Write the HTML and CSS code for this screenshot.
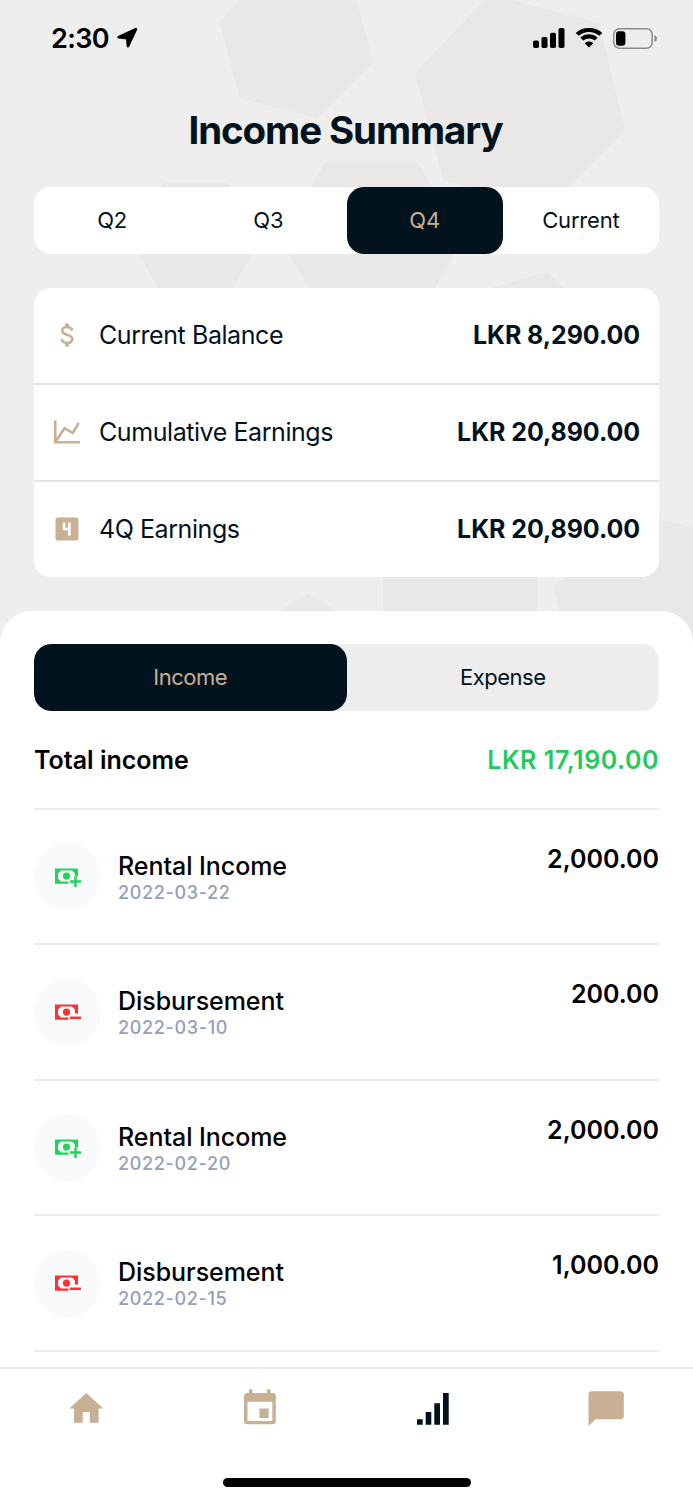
FILE: index.html
```html
<!DOCTYPE html>
<html lang="en">
<head>
<meta charset="utf-8">
<title>Income Summary</title>
<link rel="stylesheet" href="styles.css">
</head>
<body>
<svg width="0" height="0" class="defs">
  <symbol id="cash" viewBox="0 0 26 19">
    <path d="M0 0.500H23V9.500H20V15.700H0Z"/>
    <path fill="#f8fafc" d="M6 2.600L3 5.600V10.600L6 13.600H20V5.600L17 2.600Z"/>
    <path d="M11.500 4.500a3.600 3.600 0 1 1 0 7.200a3.600 3.600 0 1 1 0-7.200Z"/>
  </symbol>
</svg>
<div class="screen">
  <svg class="backdrop" width="693" height="650" viewBox="0 0 693 650">
    <path d="M242 -2L219 21L240 98L317 118L373 62L356 -2ZM490 -6L599 23L625 130L547 208L443 180L415 73ZM326 161H417L463 240L417 318H326L281 240ZM163 183H228L261 239L228 296H163L130 239ZM547 272L484 290L500 350H600L566 290ZM383 560H538V620H383ZM308 594L275 613H341ZM640 514L693 528V650H569L553 587Z"/>
  </svg>
  <header class="status">
    <div class="clock"><span>2:30</span>
      <svg width="21" height="22" viewBox="0 0 21 22"><path stroke="#000" stroke-width="2.600" stroke-linejoin="round" d="M18.900 2.200L11 19.200L10.200 11.300L1.600 10.300Z"/></svg>
    </div>
    <div class="signals">
      <svg width="32" height="20" viewBox="0 0 32 20"><rect y="12.500" width="6" height="7.500" rx="1.800"/><rect x="8.500" y="9" width="6" height="11" rx="1.800"/><rect x="17" y="4.800" width="6" height="15.200" rx="1.800"/><rect x="25.500" y="0" width="6" height="20" rx="1.800"/></svg>
      <svg width="28" height="20" viewBox="0 0 28 20"><path d="M3.800 7.800L.7 5.100C7.500-1.800 20.500-1.800 27.300 5.100L24.200 7.800C18.800 2.700 9.200 2.700 3.800 7.800ZM8.300 12.600L5.300 9.700C10 5.200 18 5.200 22.700 9.700L19.700 12.600C16.300 9.700 11.700 9.700 8.300 12.600ZM14 19.600L9.800 15.200C12 12.900 16 12.900 18.200 15.200Z"/></svg>
      <svg width="44" height="21" viewBox="0 0 44 21"><rect x=".8" y=".8" width="38.400" height="19.400" rx="5.500" fill="none" stroke="#8c8c8c" stroke-width="1.500"/><rect x="3" y="3.200" width="9.400" height="14.600" rx="3"/><path fill="#8c8c8c" d="M41.500 7Q44 8 44 10.500T41.500 14Z"/></svg>
    </div>
  </header>
  <h1 class="title"><span>Income Summary</span></h1>
  <nav class="tabs quarters"><span class="tab">Q2</span><span class="tab">Q3</span><span class="tab active">Q4</span><span class="tab">Current</span></nav>
  <section class="card">
    <div class="stat">
      <svg width="26" height="26" viewBox="0 0 26 26"><path fill="none" stroke="#c8b095" stroke-width="2.600" d="M18.200 8.600C17.600 5.900 15.600 5 13 5C10.200 5 8.200 6.300 8.200 8.600C8.200 11 10 12 13 12.800C16.500 13.600 18.200 14.800 18.200 17.200C18.200 19.700 16 20.900 13 20.900C9.900 20.900 8 19.700 7.700 17.200"/><path d="M11.100 1.500h3.800v3.500h-3.800zM11.100 21h3.800v3.500h-3.800z"/></svg>
      <span class="label">Current Balance</span><b class="amount">LKR 8,290.00</b>
    </div>
    <div class="stat">
      <svg width="26" height="26" viewBox="0 0 26 26"><path fill="none" stroke="#c8b095" stroke-width="2.500" d="M1.300 1.500V23.300H26M2 22L10.500 9.200L18.800 14L24.800 3.800"/></svg>
      <span class="label">Cumulative Earnings</span><b class="amount">LKR 20,890.00</b>
    </div>
    <div class="stat">
      <svg width="26" height="26" viewBox="0 0 26 26"><path fill-rule="evenodd" d="M4 1.500H22A2.500 2.500 0 0 1 24.500 4V22A2.500 2.500 0 0 1 22 24.500H4A2.500 2.500 0 0 1 1.500 22V4A2.500 2.500 0 0 1 4 1.500ZM8.800 6.500V14.300H14V19.500H16.700V6.500H14V11.700H11.400V6.500Z"/></svg>
      <span class="label">4Q Earnings</span><b class="amount">LKR 20,890.00</b>
    </div>
  </section>
  <main class="sheet">
    <nav class="tabs kinds"><span class="tab active">Income</span><span class="tab">Expense</span></nav>
    <div class="total"><span class="total-label">Total income</span><span class="total-value">LKR 17,190.00</span></div>
    <div class="entry"><div class="badge plus"><svg width="26" height="19"><use href="#cash"/><path class="halo" d="M20.500 8.500V19M13.500 13.500H26"/><path class="sign" d="M20.500 8.500V19M15 13.500H26"/></svg></div><div class="info"><span class="name">Rental Income</span><span class="date">2022-03-22</span></div><span class="value">2,000.00</span></div>
    <div class="entry"><div class="badge minus"><svg width="26" height="19"><use href="#cash"/><path class="halo" d="M13.500 13.800H26"/><path class="sign" d="M15 13.800H26"/></svg></div><div class="info"><span class="name">Disbursement</span><span class="date">2022-03-10</span></div><span class="value">200.00</span></div>
    <div class="entry"><div class="badge plus"><svg width="26" height="19"><use href="#cash"/><path class="halo" d="M20.500 8.500V19M13.500 13.500H26"/><path class="sign" d="M20.500 8.500V19M15 13.500H26"/></svg></div><div class="info"><span class="name">Rental Income</span><span class="date">2022-02-20</span></div><span class="value">2,000.00</span></div>
    <div class="entry"><div class="badge minus"><svg width="26" height="19"><use href="#cash"/><path class="halo" d="M13.500 13.800H26"/><path class="sign" d="M15 13.800H26"/></svg></div><div class="info"><span class="name">Disbursement</span><span class="date">2022-02-15</span></div><span class="value">1,000.00</span></div>
  </main>
  <footer class="bottom">
    <div class="nav">
      <svg width="42" height="42" viewBox="0 0 42 42"><path d="M20.300 6L37.300 21.500H32.600V35.800H23.800V25H16.800V35.800H8V21.500H3.300Z"/></svg>
      <svg width="42" height="42" viewBox="0 0 42 42"><path fill-rule="evenodd" d="M10 2.300H13.500V6H27.800V2.300H31.500V6H33.500A3.300 3.300 0 0 1 36.800 9.300V34A3.300 3.300 0 0 1 33.500 37.300H8.300A3.300 3.300 0 0 1 5 34V9.300A3.300 3.300 0 0 1 8.300 6H10ZM8.500 14.700V34H33.300V14.700ZM20.500 21.500H29.700V31H20.500Z"/></svg>
      <svg class="dark" width="42" height="42" viewBox="0 0 42 42"><path d="M5 32.200H10.700V37.700H5ZM13.700 25H19.300V37.700H13.700ZM22.300 16.300H28V37.700H22.300ZM31 6H36.700V37.700H31Z"/></svg>
      <svg width="42" height="42" viewBox="0 0 42 42"><path d="M6.800 4.200H35.500A3.300 3.300 0 0 1 38.800 7.500V29A3.300 3.300 0 0 1 35.500 32.300H10.500L3.500 39.300V7.500A3.300 3.300 0 0 1 6.800 4.200Z"/></svg>
    </div>
    <div class="home-bar"></div>
  </footer>
</div>
</body>
</html>
```
FILE: styles.css
```css
* { box-sizing: border-box; }
body { margin: 0; font-family: Inter, "Liberation Sans", sans-serif; color: #02131d; }
svg { display: block; flex: none; }
.defs { position: absolute; }
.screen { position: relative; width: 693px; height: 1500px; overflow: hidden; background: #eee; display: flex; flex-direction: column; }
.backdrop { position: absolute; top: 0; left: 0; fill: #e9e8e6; }
.status { position: relative; height: 76px; padding: 0 36px 0 51px; display: flex; justify-content: space-between; align-items: center; color: #000; }
.clock { display: flex; align-items: center; gap: 8px; font-size: 27px; font-weight: 600; letter-spacing: -0.6px; }
.signals { display: flex; align-items: center; gap: 10px; }
.title { position: relative; margin: 0; height: 111px; padding-right: 2px; text-align: center; font-size: 38.500px; line-height: 109px; font-weight: 700; letter-spacing: -1.1px; }
.tabs { position: relative; display: flex; flex: none; height: 67px; border-radius: 17px; overflow: hidden; font-size: 22px; line-height: 67px; letter-spacing: -0.2px; }
.quarters { margin: 0 34px; background: #fff; }
.tab { flex: 1; text-align: center; border-radius: 17px; }
.tab.active { background: #02131d; color: #c8b095; }
.card { position: relative; flex: none; margin: 34px 34px 0; height: 289px; border-radius: 17px; background: #fff; display: grid; grid-template-rows: 95px 97px 97px; }
.stat { display: flex; align-items: center; padding: 0 19px 1px 20px; fill: #c8b095; }
.stat + .stat { border-top: 2px solid #e4e4ea; }
.label { margin-left: 19px; font-size: 25px; letter-spacing: -0.43px; }
.amount { margin-left: auto; font-size: 25px; font-weight: 700; letter-spacing: -0.08px; }
.sheet { position: relative; flex: none; height: 756px; margin-top: 34px; padding: 33px 34px 0; border-radius: 32px 32px 0 0; background: #fff; overflow: hidden; color: #000; }
.kinds { background: #eee; color: #02131d; letter-spacing: -0.5px; }
.total { height: 98.500px; display: flex; justify-content: space-between; font-size: 25px; line-height: 98px; font-weight: 600; border-bottom: 2px solid #e9edf2; }
.total-value { color: #25c95b; letter-spacing: 0.55px; }
.entry { height: 135.600px; display: flex; border-bottom: 2px solid #e9edf2; padding: 33.600px 0 0 0; }
.badge { width: 67px; height: 67px; flex: none; border-radius: 50%; background: #f8fafc; display: flex; align-items: center; justify-content: center; padding-top: 2px; }
.plus { fill: #23d25b; stroke: #23d25b; }
.minus { fill: #f93232; stroke: #f93232; }
.badge use { stroke: none; }
.badge .halo { stroke: #f8fafc; stroke-width: 5.500; }
.sign { stroke-width: 2.500; }
.info { margin-left: 17px; display: flex; flex-direction: column; }
.name { font-size: 25px; font-weight: 500; line-height: 30px; margin-top: 7.500px; letter-spacing: -0.05px; }
.date { font-size: 18px; font-weight: 500; line-height: 23px; letter-spacing: 0.65px; color: #949fb8; }
.value { margin: -0.500px 0 0 auto; font-size: 25px; font-weight: 600; line-height: 32px; }
.bottom { position: relative; height: 133px; flex: none; background: #fff; border-top: 2px solid #ececf0; display: flex; flex-direction: column; align-items: center; }
.nav { width: 100%; height: 109px; padding-top: 18px; display: grid; grid-template-columns: repeat(4, 1fr); justify-items: center; align-items: start; fill: #c8b095; }
.dark { fill: #02131d; }
.home-bar { width: 248px; height: 9px; border-radius: 5px; background: #000; }
```
